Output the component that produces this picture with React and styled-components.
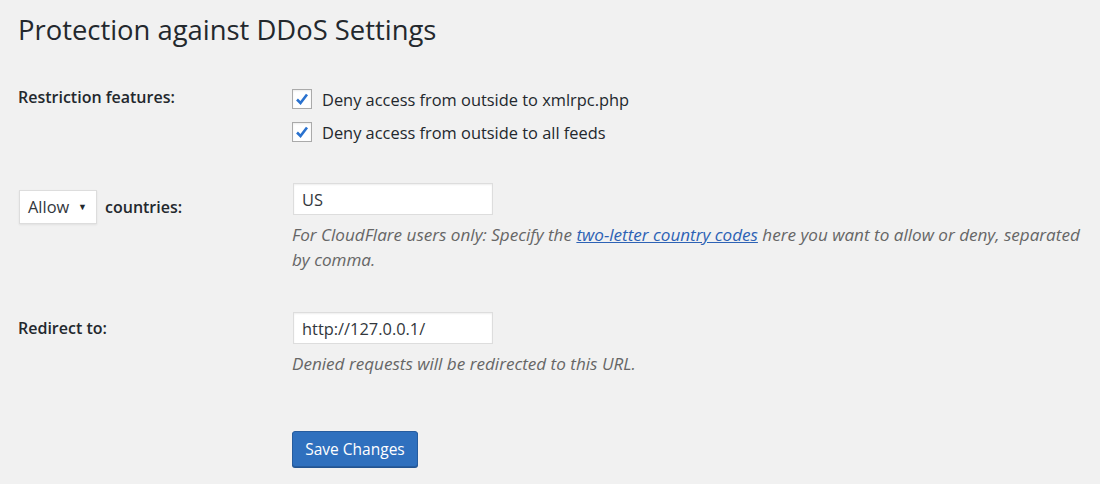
import React from 'react';
import styled, { createGlobalStyle } from 'styled-components';

const GlobalStyle = createGlobalStyle`
  html, body {
    margin: 0;
    padding: 0;
    background: #f1f1f1;
  }
  body {
    font-family: 'Open Sans', 'Noto Sans', sans-serif;
    color: #23282d;
  }
`

const Wrap = styled.div`
  padding: 0 18px 0 18px;
  width: 1100px;
  height: 484px;
  box-sizing: border-box;
  overflow: hidden;
`

const Title = styled.h1`
  font-size: 27.4px;
  font-weight: 400;
  margin: 0;
  padding: 13px 0 0 0;
  line-height: 34px;
  color: #23282d;
`

const Row = styled.div`
  display: grid;
  grid-template-columns: 274px 1fr;
  margin-top: ${props => props.top}px;
`

const Label = styled.div`
  font-weight: 600;
  font-size: 16px;
  line-height: 20px;
  padding-top: ${props => props.pad || 0}px;
  display: flex;
  align-items: center;
  gap: 8px;
  align-self: start;
`

const Field = styled.div`
  display: flex;
  flex-direction: column;
  padding-top: ${props => props.pad || 0}px;
`

const CheckLine = styled.label`
  display: flex;
  align-items: center;
  height: 20px;
  gap: 10px;
  font-size: 16.4px;
  margin-bottom: 13px;
  cursor: pointer;
`

const Box = styled.span`
  width: 18px;
  height: 18px;
  border: 1px solid #aaaaaa;
  background: #fff;
  box-shadow: inset 0 1px 2px rgba(0,0,0,0.08);
  display: flex;
  align-items: center;
  justify-content: center;
  flex-shrink: 0;
`

const TextInput = styled.input`
  width: 200px;
  height: 32px;
  box-sizing: border-box;
  border: 1px solid #dddddd;
  box-shadow: inset 0 1px 2px rgba(0,0,0,0.07);
  background: #fff;
  font-family: 'Open Sans', 'Noto Sans', sans-serif;
  font-size: 16.4px;
  color: #32373c;
  padding: 0 8px;
  margin: 0 0 0 1px;
  outline: none;
`

const Select = styled.div`
  width: 78px;
  height: 34px;
  box-sizing: border-box;
  border: 1px solid #dddddd;
  background: #fff;
  box-shadow: 0 1px 2px rgba(0,0,0,0.07);
  display: flex;
  align-items: center;
  justify-content: space-between;
  padding: 0 9px 0 8px;
  font-weight: 400;
  font-size: 16.4px;
  color: #32373c;
  margin-left: 1px;
`

const Caret = styled.span`
  font-size: 9px;
  color: #23282d;
`

const Description = styled.p`
  margin: 7px 0 0 0;
  font-style: italic;
  font-size: 17.1px;
  line-height: 25px;
  color: #666;
  padding-right: 2px;

  a {
    color: #2d62b5;
    text-decoration: underline;
  }
`

const Button = styled.button`
  width: 126px;
  height: 36px;
  background: #2f70be;
  border: 1px solid #265c9e;
  border-radius: 3px;
  box-shadow: 0 1px 0 #235491;
  color: #fff;
  font-family: 'Open Sans', 'Noto Sans', sans-serif;
  font-size: 15.5px;
  padding: 0;
  cursor: pointer;
`

const Check = () => (
  <svg width="16" height="16" viewBox="0 0 16 16">
    <path d="M3 8.5 L6.5 12 L13 3.5" fill="none" stroke="#2a72cf" strokeWidth="2.6" strokeLinecap="butt" />
  </svg>
)

const App = () => (
  <Wrap>
    <GlobalStyle />
    <Title>Protection against DDoS Settings</Title>
    <Row top={40}>
      <Label>Restriction features:</Label>
      <Field pad={2}>
        <CheckLine><Box><Check /></Box>Deny access from outside to xmlrpc.php</CheckLine>
        <CheckLine><Box><Check /></Box>Deny access from outside to all feeds</CheckLine>
      </Field>
    </Row>
    <Row top={28}>
      <Label pad={7}>
        <Select>Allow <Caret>▼</Caret></Select>
        countries:
      </Label>
      <Field>
        <TextInput defaultValue="US" />
        <Description>
          For CloudFlare users only: Specify the <a href="#">two-letter country codes</a> here you want to allow or deny, separated by comma.
        </Description>
      </Field>
    </Row>
    <Row top={40}>
      <Label pad={6}>Redirect to:</Label>
      <Field>
        <TextInput defaultValue="http://127.0.0.1/" />
        <Description>Denied requests will be redirected to this URL.</Description>
      </Field>
    </Row>
    <Row top={55}>
      <div />
      <div><Button>Save Changes</Button></div>
    </Row>
  </Wrap>
)

export default App;
